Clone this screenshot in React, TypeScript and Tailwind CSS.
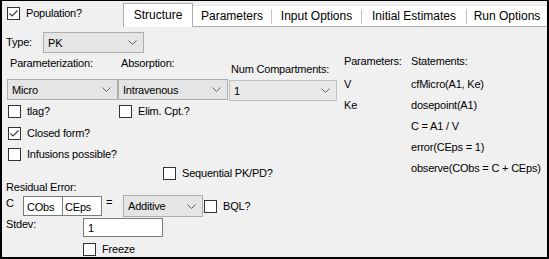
import React from "react"

const tabs = [
  { label: "Structure", w: "w-[70px]" },
  { label: "Parameters", w: "w-[79px]" },
  { label: "Input Options", w: "w-[90px]" },
  { label: "Initial Estimates", w: "w-[105px]" },
  { label: "Run Options", w: "w-[80px]" },
]

const parameters = ["V", "Ke"]
const statements = [
  "cfMicro(A1, Ke)",
  "dosepoint(A1)",
  "C = A1 / V",
  "error(CEps = 1)",
  "observe(CObs = C + CEps)",
]

function Chevron() {
  return (
    <svg width="9" height="5" viewBox="0 0 9 5" className="shrink-0">
      <path d="M0.5 0.5 L4.5 4.5 L8.5 0.5" fill="none" stroke="#606060" strokeWidth="1" />
    </svg>
  )
}

function Check({ checked, label, className = "" }: { checked?: boolean; label: string; className?: string }) {
  return (
    <div className={`flex items-center gap-[6px] h-[13px] ${className}`}>
      <div className="w-[13px] h-[13px] border border-[#333333] bg-white flex items-center justify-center shrink-0">
        {checked && (
          <svg width="11" height="11" viewBox="0 0 11 11">
            <path d="M1.5 5.5 L4 8 L9.5 2.5" fill="none" stroke="#404040" strokeWidth="1.2" />
          </svg>
        )}
      </div>
      <span className="leading-[13px] whitespace-nowrap">{label}</span>
    </div>
  )
}

function Select({ value, className = "" }: { value: string; className?: string }) {
  return (
    <div
      className={`flex items-center justify-between h-[21px] border border-[#adadad] bg-[#e5e5e5] pl-[4px] pr-[6px] ${className}`}
    >
      <span className="leading-[13px] pt-[1px]">{value}</span>
      <Chevron />
    </div>
  )
}

export default function App() {
  return (
    <div className="w-[549px] h-[259px] overflow-hidden bg-[#f0f0f0] border-2 border-t border-black text-[11px] tracking-[-0.2px] text-black font-['Liberation_Sans',Arial,sans-serif] flex flex-col">
      {/* top row: population checkbox + tab strip */}
      <div className="flex h-[26px] shrink-0">
        <Check checked label="Population?" className="ml-[5px] mt-[6px]" />
        <div className="ml-auto w-[424px] flex items-end text-[12px] tracking-normal">
          {tabs.map((t, i) =>
            i === 0 ? (
              <div
                key={t.label}
                className={`${t.w} h-[24px] bg-white border-l border-t border-r border-[#adadad] flex items-center justify-center pb-[1px]`}
              >
                {t.label}
              </div>
            ) : (
              <div
                key={t.label}
                className={`${t.w} h-[22px] bg-white border-t border-t-[#e6e6e6] border-b border-b-[#adadad] flex items-center`}
              >
                <span className="flex-1 text-center">{t.label}</span>
                {i < tabs.length - 1 && <span className="w-px h-[15px] bg-[#c4c4c4]" />}
              </div>
            )
          )}
        </div>
      </div>

      <div className="flex flex-1">
        {/* left form */}
        <div className="w-[336px] shrink-0 flex flex-col">
          <div className="flex items-center h-[21px] mt-[5px]">
            <span className="w-[41px] pl-[4px]">Type:</span>
            <Select value="PK" className="w-[101px]" />
          </div>

          <div className="flex h-[26px]">
            <span className="w-[119px] pl-[8px] pt-[4px] leading-[13px]">Parameterization:</span>
            <span className="w-[110px] pt-[4px] leading-[13px]">Absorption:</span>
            <span className="pt-[10px] leading-[13px]">Num Compartments:</span>
          </div>

          <div className="flex items-start h-[22px] pl-[5px]">
            <Select value="Micro" className="w-[111px]" />
            <Select value="Intravenous" className="w-[110px]" />
            <Select value="1" className="w-[108px] ml-[1px] mt-[1px] bg-[#e9e9e9] border-[#c2c2c2]" />
          </div>

          <div className="flex mt-[4px] pl-[6px]">
            <Check label="tlag?" className="w-[111px]" />
            <Check label="Elim. Cpt.?" />
          </div>
          <Check checked label="Closed form?" className="mt-[9px] ml-[6px]" />
          <Check label="Infusions possible?" className="mt-[8px] ml-[6px]" />
          <Check label="Sequential PK/PD?" className="mt-[6px] ml-[161px]" />

          <div className="h-[13px] leading-[13px] mt-[1px] pl-[4px]">Residual Error:</div>

          <div className="flex items-start h-[21px] mt-[2px]">
            <span className="w-[21px] pl-[4px] leading-[13px] mt-[1px]">C</span>
            <div className="w-[40px] h-[20px] bg-white border border-[#7a7a7a] pl-[3px] flex items-center leading-[13px] pt-[2px]">
              CObs
            </div>
            <div className="w-[40px] h-[20px] -ml-px bg-white border border-[#7a7a7a] pl-[2px] flex items-center leading-[13px] pt-[2px]">
              CEps
            </div>
            <span className="w-[21px] pl-[4px] leading-[13px]">=</span>
            <Select value="Additive" className="w-[80px] h-[22px] -mt-[1px]" />
            <Check label="BQL?" className="ml-[1px] mt-[4px]" />
          </div>

          <div className="flex items-start h-[19px] mt-[1px]">
            <span className="w-[81px] pl-[4px] leading-[13px]">Stdev:</span>
            <div className="w-[80px] h-[19px] bg-white border border-[#7a7a7a] pl-[4px] flex items-center leading-[13px] pt-[2px]">
              1
            </div>
          </div>

          <Check label="Freeze" className="mt-[6px] ml-[81px]" />
        </div>

        {/* parameters / statements */}
        <div className="flex pl-[6px] mt-[24px]">
          <div className="w-[67px] flex flex-col">
            <div className="h-[21px] leading-[21px] mb-[2px]">Parameters:</div>
            {parameters.map((p) => (
              <div key={p} className="h-[21px] leading-[21px]">
                {p}
              </div>
            ))}
          </div>
          <div className="flex flex-col">
            <div className="h-[21px] leading-[21px] mb-[2px]">Statements:</div>
            {statements.map((s) => (
              <div key={s} className="h-[21px] leading-[21px] whitespace-nowrap">
                {s}
              </div>
            ))}
          </div>
        </div>
      </div>
    </div>
  )
}
